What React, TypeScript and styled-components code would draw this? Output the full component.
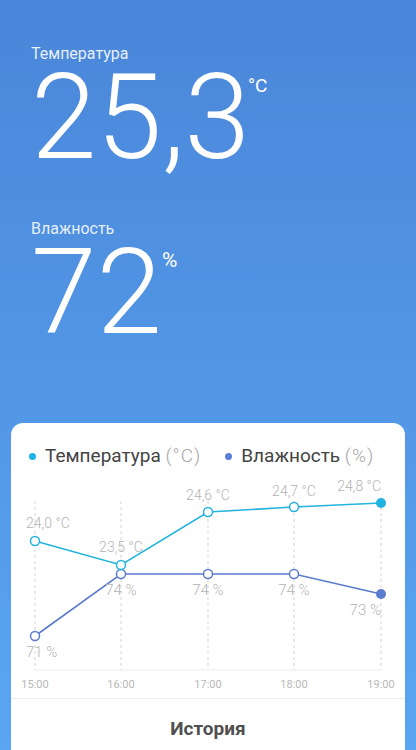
import React from "react";
import styled, { createGlobalStyle } from "styled-components";

const GlobalStyle = createGlobalStyle`
  html, body {
    margin: 0;
    padding: 0;
  }
  body {
    font-family: Roboto, "Noto Sans", "Liberation Sans", sans-serif;
  }
`;

const TEMP_COLOR = "#22b3de";
const HUM_COLOR = "#5b7bcf";

const Page = styled.div`
  width: 416px;
  height: 750px;
  overflow: hidden;
  display: flex;
  flex-direction: column;
  background: linear-gradient(180deg, #4a86d9 0%, #5aa6f2 100%);
`;

const Header = styled.section`
  padding: 44px 0 0 31px;
  display: flex;
  flex-direction: column;
`;

const Metric = styled.div<{ $gap?: number }>`
  display: flex;
  flex-direction: column;
  margin-top: ${(p) => p.$gap ?? 0}px;
`;

const Label = styled.div`
  font-size: 16px;
  line-height: 19px;
  color: rgba(255, 255, 255, 0.88);
`;

const ValueRow = styled.div`
  display: flex;
  align-items: flex-start;
  margin-top: 7px;
  color: #fff;
`;

const Number = styled.div`
  font-size: 118px;
  font-weight: 300;
  line-height: 96px;
`;

const Unit = styled.span<{ $top: number; $size: number; $left: number }>`
  font-size: ${(p) => p.$size}px;
  line-height: 1;
  font-weight: 400;
  margin-top: ${(p) => p.$top}px;
  margin-left: ${(p) => p.$left}px;
`;

const Card = styled.div`
  margin: auto 11px 0;
  height: 327px;
  background: #fff;
  border-radius: 12px 12px 0 0;
  display: flex;
  flex-direction: column;
`;

const Legend = styled.div`
  display: flex;
  align-items: center;
  gap: 24px;
  padding: 22px 0 0 18px;
`;

const LegendItem = styled.div`
  display: flex;
  align-items: center;
  gap: 9px;
  font-size: 19px;
  line-height: 22px;
  color: #444;
`;

const Dot = styled.span<{ $color: string }>`
  width: 7px;
  height: 7px;
  border-radius: 50%;
  background: ${(p) => p.$color};
`;

const Paren = styled.span`
  color: #a8a8a8;
  font-weight: 300;
  letter-spacing: 1px;
`;

const Chart = styled.svg`
  display: block;
  margin-top: 6px;
  font-family: Roboto, "Liberation Sans", sans-serif;
`;

const Footer = styled.div`
  flex: 1;
  border-top: 1px solid #ececec;
  padding-top: 19px;
  text-align: center;
  font-size: 19px;
  line-height: 22px;
  font-weight: 700;
  color: #505050;
`;

const xs = [24, 110, 197, 283, 370];
const times = ["15:00", "16:00", "17:00", "18:00", "19:00"];

type Pt = { y: number; label: string; lx: number; ly: number; anchor: "start" | "middle" | "end" };

const temps: Pt[] = [
  { y: 68, label: "24,0 °C", lx: 15, ly: 55, anchor: "start" },
  { y: 92, label: "23,5 °C", lx: 110, ly: 79, anchor: "middle" },
  { y: 39, label: "24,6 °C", lx: 197, ly: 27, anchor: "middle" },
  { y: 34, label: "24,7 °C", lx: 283, ly: 23, anchor: "middle" },
  { y: 30, label: "24,8 °C", lx: 370, ly: 18, anchor: "end" },
];

const hums: Pt[] = [
  { y: 163, label: "71 %", lx: 15, ly: 184, anchor: "start" },
  { y: 101, label: "74 %", lx: 110, ly: 122, anchor: "middle" },
  { y: 101, label: "74 %", lx: 197, ly: 122, anchor: "middle" },
  { y: 101, label: "74 %", lx: 283, ly: 122, anchor: "middle" },
  { y: 121, label: "73 %", lx: 370, ly: 142, anchor: "end" },
];

const Series = ({ pts, color, size }: { pts: Pt[]; color: string; size: number }) => (
  <g>
    <polyline
      points={pts.map((p, i) => `${xs[i]},${p.y}`).join(" ")}
      fill="none"
      stroke={color}
      strokeWidth={1.6}
    />
    {pts.map((p, i) =>
      i === pts.length - 1 ? (
        <circle key={i} cx={xs[i]} cy={p.y} r={5} fill={color} />
      ) : (
        <circle key={i} cx={xs[i]} cy={p.y} r={4.5} fill="#fff" stroke={color} strokeWidth={1.5} />
      )
    )}
    {pts.map((p, i) => (
      <text key={"l" + i} x={p.lx} y={p.ly} textAnchor={p.anchor} fontSize={size} fill="#b3b3b3" fontWeight={300}>
        {p.label}
      </text>
    ))}
  </g>
);

export default function App() {
  return (
    <>
      <GlobalStyle />
      <Page>
        <Header>
          <Metric>
            <Label>Температура</Label>
            <ValueRow>
              <Number>25,3</Number>
              <Unit $top={6} $size={19} $left={-2}>°C</Unit>
            </ValueRow>
          </Metric>
          <Metric $gap={53}>
            <Label>Влажность</Label>
            <ValueRow>
              <Number>72</Number>
              <Unit $top={5} $size={21} $left={0}>%</Unit>
            </ValueRow>
          </Metric>
        </Header>

        <Card>
          <Legend>
            <LegendItem>
              <Dot $color="#1fb2e5" />
              <span>
                Температура <Paren>(°C)</Paren>
              </span>
            </LegendItem>
            <LegendItem>
              <Dot $color="#5b7fd6" />
              <span>
                Влажность <Paren>(%)</Paren>
              </span>
            </LegendItem>
          </Legend>

          <Chart width={394} height={225} viewBox="0 0 394 225">
            {xs.map((x) => (
              <line key={x} x1={x} x2={x} y1={28} y2={197} stroke="#d4d4d4" strokeDasharray="3 3" />
            ))}
            <line x1={22} x2={372} y1={197} y2={197} stroke="#ececec" />
            {xs.map((x, i) => (
              <text key={times[i]} x={x} y={215} textAnchor="middle" fontSize={11} fill="#b8b8b8">
                {times[i]}
              </text>
            ))}
            <Series pts={hums} color={HUM_COLOR} size={15} />
            <Series pts={temps} color={TEMP_COLOR} size={14} />
          </Chart>

          <Footer>История</Footer>
        </Card>
      </Page>
    </>
  );
}
